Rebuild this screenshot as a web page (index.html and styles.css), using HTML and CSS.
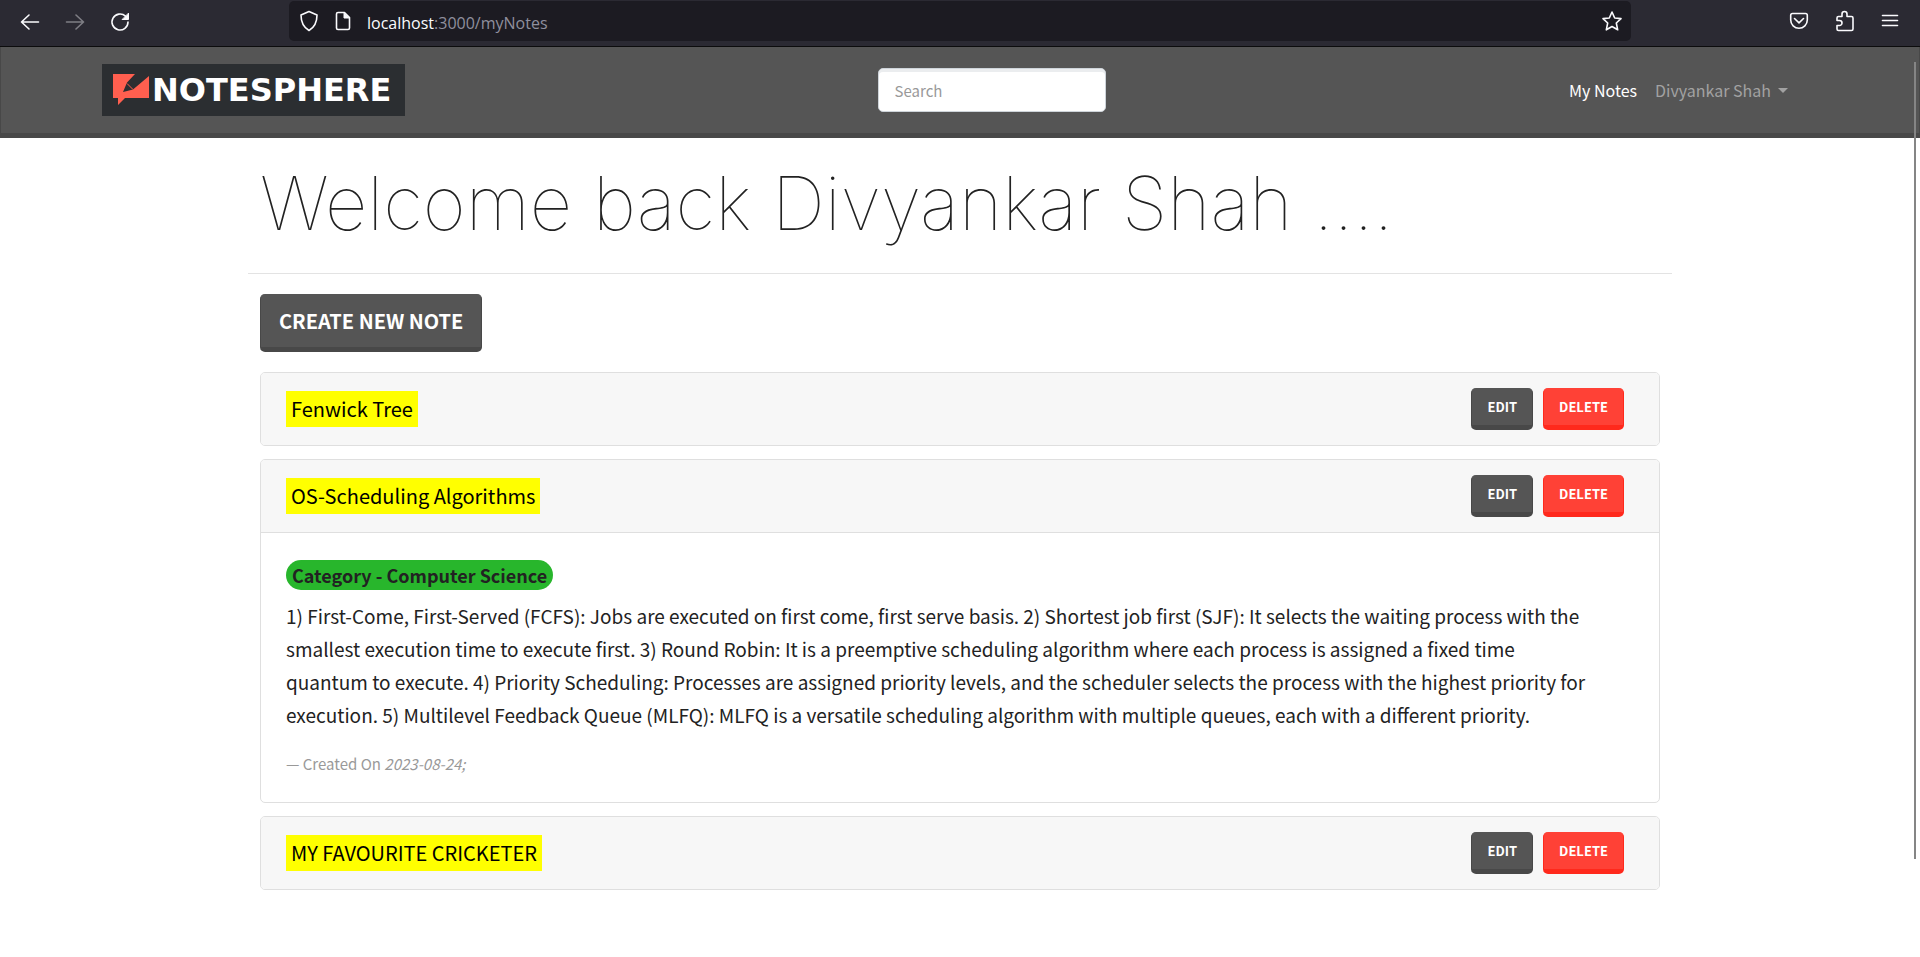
FILE: index.html
```html
<!DOCTYPE html>
<html lang="en">
<head>
<meta charset="utf-8">
<title>NoteSphere - My Notes</title>
<link rel="stylesheet" href="styles.css">
</head>
<body>
<div class="browser">
  <div class="browser-nav">
    <button class="tool" aria-label="Back"><svg width="20" height="20" viewBox="0 0 20 20"><path d="M18.500 10H1.500M9 3L1.500 10L9 17"/></svg></button>
    <button class="tool dim" aria-label="Forward"><svg width="20" height="20" viewBox="0 0 20 20"><path d="M1.500 10H18.500M11 3L18.500 10L11 17"/></svg></button>
    <button class="tool" aria-label="Reload"><svg width="20" height="20" viewBox="0 0 20 20"><path d="M15.500 4.200A8 8 0 1 0 18 10"/><path class="fill" d="M18.500 1.500V7.500H12.500Z"/></svg></button>
  </div>
  <div class="address">
    <svg width="20" height="22" viewBox="0 0 20 22"><path d="M10 1.500L18 5C18 12 16 17 10 20.500C4 17 2 12 2 5Z"/></svg>
    <svg width="16" height="20" viewBox="0 0 16 20"><path d="M3 1.500H9.500L14.500 6.500V17Q14.500 18.500 13 18.500H3Q1.500 18.500 1.500 17V3Q1.500 1.500 3 1.500Z"/><path class="fill" d="M9 1.500V7H14.500Z"/></svg>
    <span class="url"><b>localhost</b>:3000/myNotes</span>
    <button class="tool star" aria-label="Bookmark"><svg width="22" height="22" viewBox="0 0 22 22"><path d="M11 2L13.700 8L20 8.600L15.300 13L16.700 19.800L11 16.500L5.300 19.800L6.700 13L2 8.600L8.300 8Z"/></svg></button>
  </div>
  <div class="browser-tools">
    <button class="tool" aria-label="Pocket"><svg width="20" height="20" viewBox="0 0 20 20"><path d="M3.500 2.500H16.500Q18.300 2.500 18.300 4.300V9A8.300 8.300 0 0 1 1.700 9V4.300Q1.700 2.500 3.500 2.500Z"/><path d="M5.500 7.500L10 11.800L14.500 7.500"/></svg></button>
    <button class="tool" aria-label="Extensions"><svg width="20" height="22" viewBox="0 0 20 22"><path d="M3.500 20.500Q2 20.500 2 19V15.500H4.500A2.300 2.300 0 0 0 4.500 10.500H2V8Q2 6.500 3.500 6.500H7V4A2.300 2.300 0 0 1 12 4V6.500H16.500Q18 6.500 18 8V19Q18 20.500 16.500 20.500Z"/></svg></button>
    <button class="tool" aria-label="Menu"><svg width="18" height="18" viewBox="0 0 18 18"><path d="M1.500 3.500H16.500M1.500 8.500H16.500M1.500 13.500H16.500"/></svg></button>
  </div>
</div>

<header class="navbar">
  <a class="brand" href="#">
    <svg width="36" height="32" viewBox="0 0 36 32"><path d="M0 0H22L14 8.500L10 18L20 15.500L36 2V24H12L5 31V24H0Z"/><path class="nib" d="M14 9.500L20 15.500"/></svg>
    <span>NOTESPHERE</span>
  </a>
  <form class="search"><input type="text" placeholder="Search" aria-label="Search"></form>
  <nav class="links">
    <a class="current" href="#">My Notes</a>
    <a class="user" href="#">Divyankar Shah</a>
  </nav>
</header>

<main class="page">
  <h1>Welcome back Divyankar Shah ....</h1>
  <hr>
  <div class="content">
    <button class="btn create">CREATE NEW NOTE</button>

    <article class="card">
      <div class="card-head">
        <mark>Fenwick Tree</mark>
        <button class="btn small">EDIT</button>
        <button class="btn small danger">DELETE</button>
      </div>
    </article>

    <article class="card">
      <div class="card-head">
        <mark>OS-Scheduling Algorithms</mark>
        <button class="btn small">EDIT</button>
        <button class="btn small danger">DELETE</button>
      </div>
      <div class="card-body">
        <span class="badge">Category - Computer Science</span>
        <p>1) First-Come, First-Served (FCFS): Jobs are executed on first come, first serve basis. 2) Shortest job first (SJF): It selects the waiting process with the smallest execution time to execute first. 3) Round Robin: It is a preemptive scheduling algorithm where each process is assigned a fixed time quantum to execute. 4) Priority Scheduling: Processes are assigned priority levels, and the scheduler selects the process with the highest priority for execution. 5) Multilevel Feedback Queue (MLFQ): MLFQ is a versatile scheduling algorithm with multiple queues, each with a different priority.</p>
        <footer>— Created On <cite>2023-08-24;</cite></footer>
      </div>
    </article>

    <article class="card">
      <div class="card-head">
        <mark>MY FAVOURITE CRICKETER</mark>
        <button class="btn small">EDIT</button>
        <button class="btn small danger">DELETE</button>
      </div>
    </article>
  </div>
</main>
<div class="scroll-thumb"></div>
</body>
</html>
```
FILE: styles.css
```css
* { box-sizing: border-box; }

body {
  margin: 0;
  position: relative;
  background: #fff;
  color: #222;
  font-family: "Noto Sans CJK SC", sans-serif;
  font-size: 19px;
  line-height: 33px;
}

button, input { font-family: inherit; }

.browser {
  display: flex;
  align-items: center;
  height: 47px;
  padding: 0 20px;
  background: #2b2a33;
  border-bottom: 1px solid #0c0c0d;
}

.browser svg {
  display: block;
  fill: none;
  stroke: #fbfbfe;
  stroke-width: 1.6;
  stroke-linecap: round;
  stroke-linejoin: round;
}

.browser svg .fill { fill: #fbfbfe; stroke-width: 1; }

.tool {
  padding: 0;
  border: 0;
  background: none;
}

.tool.dim { opacity: 0.4; }

.browser-nav {
  display: flex;
  gap: 25px;
  width: 269px;
  padding-bottom: 2px;
}

.address {
  flex: 1;
  display: flex;
  align-items: center;
  gap: 16px;
  height: 40px;
  margin-bottom: 5px;
  padding: 0 8px 0 10px;
  border-radius: 5px;
  background: #1c1b22;
}

.url {
  padding-top: 4px;
  color: #8f8f9d;
  font-family: "Open Sans", sans-serif;
  font-size: 16px;
  line-height: 24px;
}

.url b { color: #fbfbfe; font-weight: 400; }

.star { margin-left: auto; }

.browser-tools {
  display: flex;
  align-items: center;
  justify-content: flex-end;
  gap: 26px;
  width: 269px;
  padding: 0 1px 4px 0;
}

.navbar {
  display: flex;
  align-items: center;
  height: 91px;
  padding: 0 131px 0 101px;
  background: #555;
  border: solid #484848;
  border-width: 0 1px 5px;
}

.brand {
  display: flex;
  align-items: center;
  gap: 3px;
  width: 303px;
  height: 52px;
  margin-right: 16px;
  padding-left: 11px;
  background: #2b2e31;
  color: #fff;
  font-family: "DejaVu Sans", sans-serif;
  font-size: 32px;
  font-weight: 700;
  line-height: 52px;
  text-decoration: none;
}

.brand svg { fill: #ff5f4f; }
.brand .nib { stroke: #ff5f4f; stroke-width: 1; }

.search { flex: 1; display: flex; justify-content: center; }

.search input {
  width: 228px;
  height: 44px;
  padding: 0 16px;
  border: 1px solid #ced4da;
  border-radius: 5px;
  background: #fff;
  box-shadow: inset 0 3px 0 #ebedef;
  font-size: 15px;
}

.search input::placeholder { color: #999; opacity: 1; }

.links {
  display: flex;
  gap: 18px;
  padding-left: 7px;
  font-size: 16px;
  line-height: 24px;
}

.links a { color: #a2a2a2; text-decoration: none; }
.links .current { color: #fff; }

.user { display: flex; align-items: center; gap: 7px; }

.user::after {
  content: "";
  border: 5px solid transparent;
  border-top-color: currentColor;
  border-bottom: 0;
}

.page {
  max-width: 1424px;
  margin: 0 auto;
}

h1 {
  margin: 0;
  padding: 20px 12px 25px;
  font-family: Inter, sans-serif;
  font-size: 74px;
  font-weight: 100;
  line-height: 90px;
}

hr {
  margin: 0;
  border: 0;
  border-top: 1px solid #e3e3e3;
}

.content {
  display: flex;
  flex-direction: column;
  align-items: stretch;
  padding: 20px 12px;
}

.btn {
  border: solid #484848;
  border-width: 0 1px 5px;
  border-radius: 5px;
  background: #555;
  color: #fff;
  font-weight: 700;
}

.create {
  align-self: flex-start;
  height: 58px;
  margin-bottom: 20px;
  padding: 0 18px;
  font-size: 20px;
}

.small {
  height: 42px;
  margin-left: 10px;
  padding: 0 15px;
  font-size: 13px;
}

.danger { background: #ff4136; border-color: #ff291c; }

.card {
  margin-bottom: 13px;
  border: 1px solid #dfdfdf;
  border-radius: 5px;
  overflow: hidden;
}

.card-head {
  display: flex;
  align-items: center;
  height: 72px;
  padding: 0 35px 0 25px;
  background: #f7f7f7;
}

.card-head .small { margin-bottom: 1px; }

mark {
  margin-right: auto;
  padding: 2px 5px;
  background: #ff0;
  color: #000;
  font-size: 20px;
  line-height: 32px;
}

.card-body {
  padding: 25px 25px 22px;
  border-top: 1px solid #dfdfdf;
}

.badge {
  display: inline-block;
  padding: 0 6px;
  border-radius: 15px;
  background: #28b62c;
  font-size: 18px;
  font-weight: 700;
  line-height: 30px;
}

.card-body p {
  margin: 8px 0 17px;
  padding-right: 42px;
}

.card-body footer {
  color: #999;
  font-size: 15px;
  line-height: 32px;
}

.scroll-thumb {
  position: absolute;
  top: 62px;
  right: 4px;
  width: 2px;
  height: 797px;
  background: #858585;
}
```
